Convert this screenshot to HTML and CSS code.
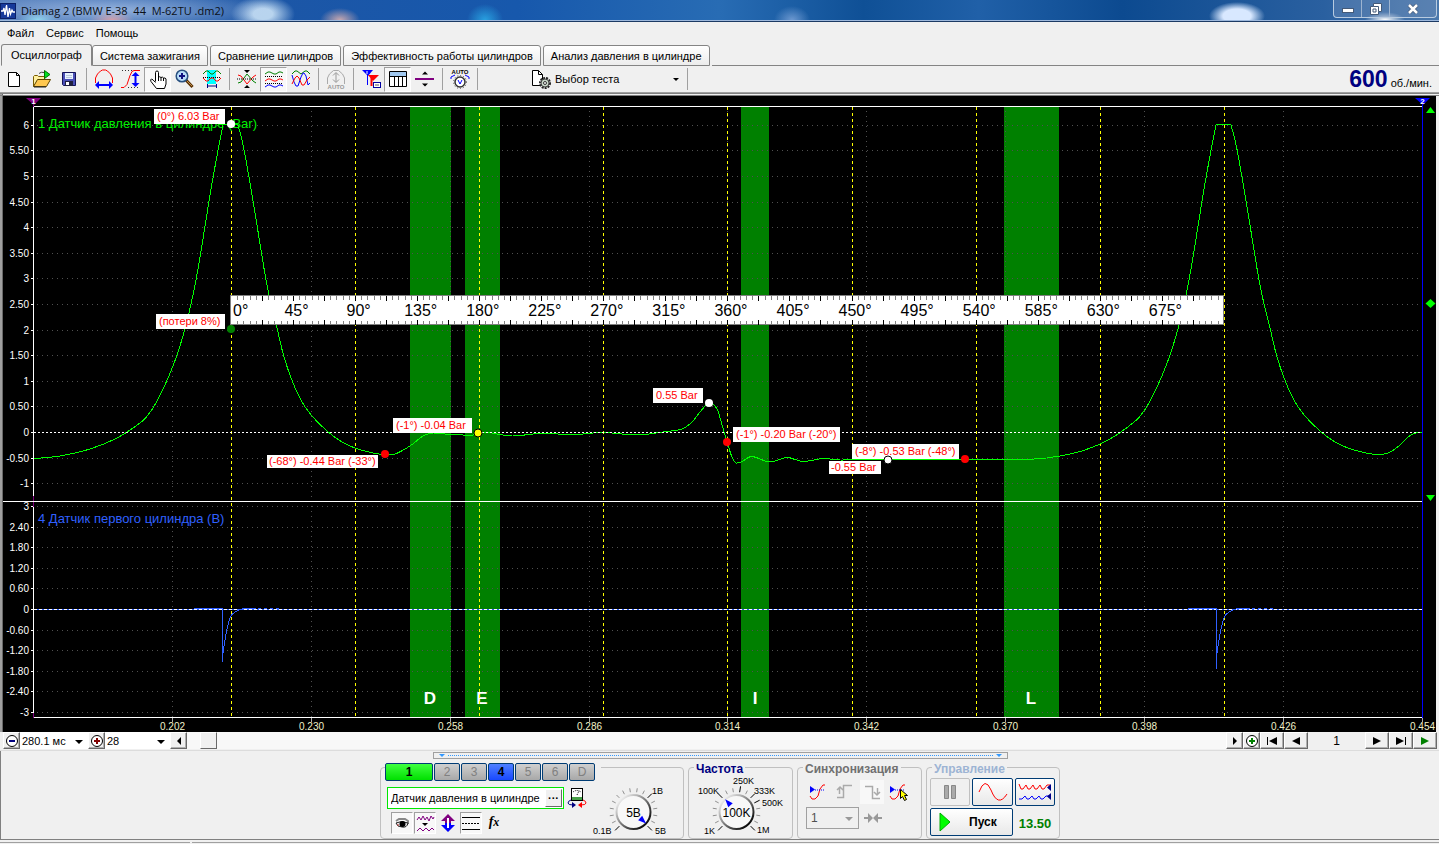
FILE: index.html
```html
<!DOCTYPE html>
<html lang="ru">
<head>
<meta charset="utf-8">
<title>Diamag 2</title>
<link rel="stylesheet" href="styles.css">
</head>
<body>
<div class="window">
  <header class="titlebar">
    <svg class="app-icon" width="16" height="16" viewBox="0 0 16 16"><rect width="16" height="16" fill="#16399a"/><path d="M.5 0v16M15.500 0v16M0 .5h16M0 15.500h16" stroke="#0a1f66"/><path d="M1 8h2l1-3 1 7 1.500-10 1.500 12 1.500-9 1 6 1.500-4 1 2h2" fill="none" stroke="#fff" stroke-width="1.300"/></svg>
    <span class="title-text">Diamag 2 (BMW E-38 &nbsp;44 &nbsp;M-62TU .dm2)</span>
    <div class="caption">
      <button aria-label="Свернуть"><svg width="12" height="8" viewBox="0 0 12 8"><rect x=".5" y="3.500" width="11" height="4" fill="#fff" stroke="#445a78"/></svg></button>
      <button aria-label="Развернуть"><svg width="12" height="12" viewBox="0 0 12 12"><path d="M3.500.5h8v8h-3v3h-8v-8h3z" fill="#fff" stroke="#445a78"/><path d="M3.500 3.500h5v5M3 6h3v3H3z" fill="none" stroke="#445a78"/></svg></button>
      <button class="caption-close" aria-label="Закрыть"><svg width="12" height="10" viewBox="0 0 12 10"><path d="M2 1l8 8M10 1L2 9" stroke="#445a78" stroke-width="4"/><path d="M2 1l8 8M10 1L2 9" stroke="#fff" stroke-width="2.500"/></svg></button>
    </div>
  </header>

  <nav class="menu">
    <button>Файл</button><button>Сервис</button><button>Помощь</button>
  </nav>

  <div class="tabs" role="tablist">
    <button class="tab active" role="tab" aria-selected="true">Осциллограф</button>
    <button class="tab" role="tab">Система зажигания</button>
    <button class="tab" role="tab">Сравнение цилиндров</button>
    <button class="tab" role="tab">Эффективность работы цилиндров</button>
    <button class="tab" role="tab">Анализ давления в цилиндре</button>
    <div class="tab-rest"></div>
  </div>

  <div class="toolbar">
    <button class="tool" aria-label="Новый"><svg width="20" height="20" viewBox="0 0 20 20"><path d="M3.500 3.500h8l3 3v11h-11z" fill="#fff" stroke="#000"/><path d="M11.500 3.500v3h3" fill="none" stroke="#000"/></svg></button>
    <button class="tool" aria-label="Открыть"><svg width="20" height="20" viewBox="0 0 20 20"><path d="M1.500 17.500v-10l1-1h3l1 1h6v3" fill="#fff0a0" stroke="#7a5c00"/><path d="M1.500 17.500l4-7h13l-4 7z" fill="#ffc850" stroke="#5c4400"/><path d="M2 18h12" stroke="#222"/><path d="M12.500 1.500v8l5.500-4z" fill="#00e020" stroke="#007000"/><path d="M7 4.500q2-2 5-1" fill="none" stroke="#444"/></svg></button>
    <button class="tool" aria-label="Сохранить"><svg width="20" height="20" viewBox="0 0 20 20"><path d="M3.500 3.500h13v13h-12l-1-1z" fill="#4a50b8" stroke="#14145a"/><rect x="6" y="4" width="8" height="6" fill="#e8f2ff"/><path d="M7 6.500h6M7 8.500h6" stroke="#b8c8dc"/><rect x="6" y="12" width="8" height="5" fill="#202040"/><rect x="7" y="13" width="3" height="3" fill="#fff"/></svg></button>
    <i class="sep"></i>
    <button class="tool" aria-label="Ширина"><svg width="20" height="20" viewBox="0 0 20 20"><path d="M1.500 14V9l2-4 3-3 2-1h3l2 1 3 3 2 4v5" fill="none" stroke="red"/><path d="M4 16h12" stroke="#00f" stroke-width="2"/><path d="M1 16l4-4v8zM19 16l-4-4v8z" fill="#00f"/></svg></button>
    <button class="tool" aria-label="Высота"><svg width="20" height="20" viewBox="0 0 20 20"><path d="M0 18.500h3l3-3 3-9 2-4 2-1h6" fill="none" stroke="red"/><path d="M1 1.500h11M7 18.500h12" stroke="#333" stroke-dasharray="1 2"/><path d="M14.500 6v9" stroke="#00f" stroke-width="2"/><path d="M14.500 3l-4 4h8zM14.500 18l-4-4h8z" fill="#00f"/></svg></button>
    <button class="tool pressed" aria-label="Рука"><svg width="20" height="20" viewBox="0 0 20 20"><path d="M7.500 12.500V3.500q0-1.500 1.500-1.500t1.500 1.500v5q1-1.500 2.500 0 1.500-1 2.500.5 2-.5 2.500 1v5l-1.500 4.500H8.500L3 12.500q-1-2 .5-2.500 1 0 4 3.500" fill="#fff" stroke="#000"/><path d="M10.500 8v4M13 8.500V12M15.500 9v3" stroke="#000"/></svg></button>
    <button class="tool" aria-label="Лупа"><svg width="20" height="20" viewBox="0 0 20 20"><path d="M11 11l6.500 7" stroke="#5a3000" stroke-width="3"/><path d="M12 12l5 5" stroke="#c09050"/><circle cx="7" cy="7" r="5.800" fill="#b8dcf8" stroke="#285080" stroke-width="1.500"/><path d="M4 7h6M7 4v6" stroke="#101080" stroke-width="2"/></svg></button>
    <button class="tool" aria-label="Фрагмент"><svg width="20" height="20" viewBox="0 0 20 20"><rect x="5" y="1" width="9" height="14" fill="#0ff"/><path d="M1 5l3-3h2l3 3h2l3-3h2l3 3" fill="none" stroke="green"/><path d="M1 8.500h18" stroke="#000" stroke-dasharray="1 1"/><path d="M1 9l3 3h2l3-3h2l3 3h2l3-3" fill="none" stroke="red"/><path d="M5.500 15v4M14.500 15v4M6 17h8" stroke="#000080"/></svg></button>
    <i class="sep"></i>
    <button class="tool" aria-label="Центр"><svg width="20" height="20" viewBox="0 0 20 20"><path d="M7 1h6l-3 3zM7 19h6l-3-3z" fill="#000"/><path d="M1 14l3-1 6-8 6 7 3 2" fill="none" stroke="green"/><path d="M1 6l3 1 6 8 6-7 3-2" fill="none" stroke="red"/><path d="M0 10h20" stroke="#000" stroke-dasharray="1 1"/></svg></button>
    <button class="tool pressed" aria-label="Раздельно"><svg width="20" height="20" viewBox="0 0 20 20"><g fill="none"><path d="M1 5l3-2h2l4 2h2l3-2h2l2 1" stroke="green"/><path d="M1 12l3-2h2l4 2h2l3-2h2l2 1" stroke="red"/><path d="M1 18l3-2h2l4 2h2l3-2h2l2 1" stroke="#00f"/><path d="M1 7.500h18M1 14.500h18" stroke="#000" stroke-dasharray="1 1"/></g></svg></button>
    <button class="tool" aria-label="Совмещение"><svg width="20" height="20" viewBox="0 0 20 20"><g fill="none"><path d="M1 5l3-3h2l4 3 4-3h2l3 3" stroke="green"/><path d="M1 6l2 7 2 4h2l3-9 2-4h1l2 3 2 9 2-2" stroke="#00f"/><path d="M1 15l3-6 2-2 2 2 3 7h2l3-5 3-3" stroke="red"/></g></svg></button>
    <i class="sep"></i>
    <button class="tool" aria-label="Авто" disabled><svg width="20" height="20" viewBox="0 0 20 20"><path d="M1.500 15V9l2-4 4-3.500h5l4 3.500 2 4v6" fill="none" stroke="#aaa"/><path d="M10 4v9M7 6.500l3-3 3 3M7 10.500l3 3 3-3" fill="none" stroke="#999"/><text x="10" y="20" class="tiny" fill="#999">AUTO</text></svg></button>
    <i class="sep"></i>
    <button class="tool" aria-label="Маркеры"><svg width="20" height="20" viewBox="0 0 20 20"><path d="M1 1h11l-5 6z" fill="#00f"/><path d="M6.500 6v10" stroke="#00f"/><path d="M7 6h11l-6 6z" fill="red"/><path d="M10.500 8v9" stroke="red" stroke-width="2"/><path d="M6 2v3" stroke="#fff"/><rect x="12.500" y="13.500" width="7" height="5" fill="#fff" stroke="#0000a0"/><path d="M14 16h4" stroke="#555"/></svg></button>
    <button class="tool pressed" aria-label="Таблица"><svg width="20" height="20" viewBox="0 0 20 20"><path d="M1.500 2.500h17v15h-17z" fill="#fff" stroke="#000"/><path d="M2 3h16v4H2z" fill="#a0c8f0"/><path d="M1 7.500h18M6.500 7v10M10.500 7v10M14.500 7v10" stroke="#000"/></svg></button>
    <button class="tool" aria-label="Разделитель"><svg width="20" height="20" viewBox="0 0 20 20"><path d="M0 10h19" stroke="#800080" stroke-width="2"/><path d="M7 5.500h6l-3-3zM7 14.500h6l-3 3z"/></svg></button>
    <i class="sep"></i>
    <button class="tool" aria-label="Авто вольтметр"><svg width="20" height="20" viewBox="0 0 20 20"><text x="10" y="5" class="tiny">AUTO</text><path d="M1 10V8l4-2M19 10V8l-4-2" fill="none" stroke="#00f"/><circle cx="10" cy="13" r="5" fill="#fff" stroke="#333" stroke-width="1.500"/><path d="M8 11l2 4 2-4" fill="none" stroke="#00f"/><circle cx="10" cy="13" r="6.500" fill="none" stroke="#555" stroke-dasharray="1 2"/></svg></button>
    <i class="sep"></i>
    <button class="test-picker">
      <svg width="20" height="20" viewBox="0 0 20 20"><path d="M1.500 1.500h6l4 4v11h-10z" fill="#fff" stroke="#000"/><path d="M7.500 1.500v4h4" fill="none" stroke="#000"/><circle cx="14" cy="14" r="5" fill="none" stroke="#222" stroke-width="2" stroke-dasharray="2 1"/><circle cx="14" cy="14" r="4" fill="#c8d8c8" stroke="#444"/><circle cx="14" cy="14" r="1.500" fill="#fff" stroke="#333"/></svg>
      <span>Выбор теста</span><i class="caret"></i>
    </button>
    <i class="sep"></i>
    <div class="rpm"><b>600</b><span>об./мин.</span></div>
  </div>

  <main class="scope">
    <svg id="chart" class="chart" viewBox="3 96 1433 636" role="img" aria-label="Осциллограмма"></svg>
  </main>

  <div class="navbar">
    <button class="nav-btn nav-small" aria-label="Уменьшить"><svg width="14" height="14" viewBox="0 0 14 14"><circle cx="7" cy="7" r="5.500" fill="#fff" stroke="#000"/><path d="M4 7h6" stroke="#000080" stroke-width="2"/></svg></button>
    <span class="combo combo-time"><select aria-label="Длительность"><option>280.1 мс</option></select></span>
    <button class="nav-btn nav-small" aria-label="Увеличить"><svg width="14" height="14" viewBox="0 0 14 14"><circle cx="7" cy="7" r="5.500" fill="#fff" stroke="#000"/><path d="M4 7h6M7 4v6" stroke="#800000" stroke-width="2"/></svg></button>
    <span class="combo combo-num"><select aria-label="Масштаб"><option>28</option></select></span>
    <button class="nav-btn nav-small" aria-label="Влево"><svg width="8" height="8" viewBox="0 0 8 8"><path d="M6 0v8L2 4z"/></svg></button>
    <div class="track"><button class="thumb" aria-label="Прокрутка"></button></div>
    <button class="nav-btn nav-small" aria-label="Вправо"><svg width="8" height="8" viewBox="0 0 8 8"><path d="M2 0v8l4-4z"/></svg></button>
    <button class="nav-btn nav-small" aria-label="Добавить"><svg width="14" height="14" viewBox="0 0 14 14"><circle cx="7" cy="7" r="5.500" fill="#fff" stroke="#000"/><path d="M4 7h6M7 4v6" stroke="green" stroke-width="2"/></svg></button>
    <button class="nav-btn" aria-label="В начало"><svg width="12" height="8" viewBox="0 0 12 8"><path d="M1 0h1v8H1zM11 0v8L3 4z"/></svg></button>
    <button class="nav-btn" aria-label="Назад"><svg width="12" height="8" viewBox="0 0 12 8"><path d="M10 0v8L2 4z"/></svg></button>
    <span class="page">1</span>
    <button class="nav-btn" aria-label="Вперёд"><svg width="12" height="8" viewBox="0 0 12 8"><path d="M2 0v8l8-4z"/></svg></button>
    <button class="nav-btn" aria-label="В конец"><svg width="12" height="8" viewBox="0 0 12 8"><path d="M10 0h1v8h-1zM1 0v8l8-4z"/></svg></button>
    <button class="nav-btn" aria-label="Воспроизвести"><svg width="12" height="8" viewBox="0 0 12 8"><path d="M2 0v8l8-4z" fill="green"/></svg></button>
  </div>

  <section class="panel">
    <div class="grip"><i></i><b></b><i></i></div>
    <div class="groups">
      <fieldset class="group group-input">
        <div class="channel-col">
          <div class="channels">
            <button class="ch ch-on">1</button><button class="ch" disabled>2</button><button class="ch" disabled>3</button><button class="ch ch-blue">4</button><button class="ch" disabled>5</button><button class="ch" disabled>6</button><button class="ch" disabled>D</button>
          </div>
          <div class="sensor">
            <div class="sensor-box"><input aria-label="Датчик" value="Датчик давления в цилиндре"><button class="dots" aria-label="Выбрать датчик">···</button></div>
            <button class="plain" aria-label="Поменять"><svg width="20" height="20" viewBox="0 0 20 20"><rect x="4.500" y=".5" width="11" height="12" fill="#fff" stroke="#000"/><path d="M6 4q4-3 8 0M10 7l2-4" fill="none" stroke="#000" stroke-dasharray="1 1"/><path d="M5 9h10v3H5z" fill="#48a048"/><path d="M4 12q-3 1-3 3 0 2 5 2" fill="none" stroke="#000080"/><path d="M5 14l4 3-4 3z" fill="#000080"/><path d="M16 12q3 1 3 3 0 2-5 2" fill="none" stroke="red"/><path d="M15 14l-4 3 4 3z" fill="red"/></svg></button>
          </div>
          <div class="view">
            <button class="toggle on" aria-label="Видимость"><svg width="20" height="20" viewBox="0 0 20 20"><path d="M4 8l3-2h6l3 2v3" fill="none" stroke="#888" stroke-width="2"/><path d="M4 10q5-3 12 0-1 5-6 4-5 0-6-4z" fill="#e8e8e8" stroke="#222"/><circle cx="10.500" cy="11" r="3"/><path d="M6 11v2" stroke="#c44"/></svg></button>
            <button class="toggle on" aria-label="Фильтр"><svg width="20" height="20" viewBox="0 0 20 20"><path d="M2 7l2-3 2 3 2-4 2 4 2-3 2 4 2-5 2 3 1-2" fill="none" stroke="purple"/><path d="M7 10h6l-3 3z"/><path d="M2 18l3-3 3 3 3-3 3 3 3-3 2 2" fill="none" stroke="purple"/></svg></button>
            <button class="toggle" aria-label="Сдвиг"><svg width="20" height="20" viewBox="0 0 20 20"><path d="M10 1l7 7h-4v2H7V8H3z" fill="purple"/><path d="M10 19l7-7h-4v-2H7v2H3z" fill="#00f"/><path d="M10 5v10" stroke="#fff" stroke-width="2"/></svg></button>
            <button class="toggle on" aria-label="Уровни"><svg width="20" height="20" viewBox="0 0 20 20"><path d="M1 4.500h18M1 16.500h18" stroke="#000"/><path d="M1 10.500h18" stroke="#000" stroke-dasharray="2 1"/></svg></button>
            <button class="toggle fx" aria-label="Функция">f<small>x</small></button>
          </div>
        </div>
        <svg class="knob" id="knob-volt" width="86" height="70" viewBox="590 768 86 70" role="img" aria-label="5В"></svg>
      </fieldset>
      <fieldset class="group group-freq">
        <legend class="navy">Частота</legend>
        <svg class="knob" id="knob-freq" width="96" height="68" viewBox="692 771 96 68" role="img" aria-label="100K"></svg>
      </fieldset>
      <fieldset class="group group-sync">
        <legend class="gray">Синхронизация</legend>
        <div class="sync-icons">
          <button class="plain" aria-label="Уровень"><svg width="20" height="20" viewBox="0 0 20 20"><path d="M2 14l2 3h3l3-3 2-7 3-4h2" fill="none" stroke="red"/><path d="M2 4v7l5-3.500z" fill="#00f"/><path d="M7 8h10" stroke="#00f" stroke-dasharray="1 1"/></svg></button>
          <button class="plain" aria-label="Фронт"><svg width="20" height="20" viewBox="0 0 20 20"><path d="M2 15.500h6.500v-12H17M4.500 5v7M2 8l3-3 3 3" fill="none" stroke="#aaa" stroke-width="1.500"/></svg></button>
          <button class="plain checked" aria-label="Спад"><svg width="20" height="20" viewBox="0 0 20 20"><path d="M3 4.500h7.500v12H18M15.500 6v7M12 10l3 3 3-3" fill="none" stroke="#aaa" stroke-width="1.500"/></svg></button>
          <button class="plain" aria-label="Авто"><svg width="20" height="20" viewBox="0 0 20 20"><path d="M1 14l2 3h3l3-3 2-7 3-4h2" fill="none" stroke="red"/><path d="M1 4v7l5-3.500z" fill="#00f"/><path d="M6 8h10" stroke="#00f" stroke-dasharray="1 1"/><path d="M11.500 7.500v9l2-2 2 4 2-1-2-4h3z" fill="#ff0" stroke="#000"/></svg></button>
        </div>
        <div class="sync-row">
          <span class="combo combo-sync"><select aria-label="Канал синхронизации" disabled><option>1</option></select></span>
          <svg width="20" height="12" viewBox="0 0 20 12"><path d="M1 6h7M12 6h7" stroke="#999" stroke-width="2"/><path d="M5 1v10l5-5zM15 1v10l-5-5z" fill="#999"/></svg>
        </div>
      </fieldset>
      <fieldset class="group group-run">
        <legend class="pale">Управление</legend>
        <div class="run-grid">
          <button class="big" aria-label="Пауза" disabled><svg width="14" height="16" viewBox="0 0 14 16"><path d="M1.500 1.500h4v13h-4zM8.500 1.500h4v13h-4z" fill="#aaa" stroke="#888"/></svg></button>
          <button class="big lit" aria-label="Осциллограмма"><svg width="30" height="22" viewBox="0 0 30 22"><path d="M1 11q6-16 12-2 7 18 16 4" fill="none" stroke="red"/></svg></button>
          <button class="big lit" aria-label="Запись"><svg width="34" height="22" viewBox="0 0 34 22"><path d="M1 3l2 5h2l3-4 2 4h2l3-4 2 4h2l3-4 2 4h2l3-4h3" fill="none" stroke="red"/><path d="M1 18h3l3-3 2 3h2l3-3 2 3h2l3-3 2 3h2l3-3h4" fill="none" stroke="#00f"/><path d="M33 3v7l-4-3.500zM33 12v7l-4-3.500z" fill="#008"/></svg></button>
          <button class="big lit start"><svg width="12" height="20" viewBox="0 0 12 20"><path d="M1 1v18l10-9z" fill="#0f0" stroke="#0a0"/></svg>Пуск</button>
          <output class="volts">13.50</output>
        </div>
      </fieldset>
    </div>
  </section>
  <footer class="status"><i></i><i></i></footer>
</div>
<script src="app.js"></script>
</body>
</html>
```
FILE: styles.css
```css
* { box-sizing: border-box; }
body { margin: 0; background: #f0f0f0; color: #000; font: 11px/14px "Liberation Sans", Arial, sans-serif; }
button, select, input { font: inherit; color: inherit; margin: 0; padding: 0; border: 0; background: none; border-radius: 0; }
svg { display: block; flex: none; }
.window { display: flex; flex-direction: column; min-height: 100vh; overflow: hidden; }

.titlebar { display: flex; align-items: center; height: 22px; gap: 5px; border-bottom: 1px solid #1c3a64; box-shadow: inset 0 -1px #9db8dc;
  background:
    radial-gradient(ellipse 170px 20px at 110px 10px, rgba(190,210,240,.7), transparent),
    radial-gradient(ellipse 20px 9px at 38px 20px, #7fd8f0, transparent),
    radial-gradient(ellipse 22px 10px at 112px 20px, #e08080, transparent),
    radial-gradient(ellipse 32px 18px at 263px 14px, #b8d4ee 30%, transparent),
    radial-gradient(ellipse 20px 12px at 340px 20px, #c8a8b0, transparent),
    radial-gradient(ellipse 18px 16px at 485px 20px, #28a0e0, transparent),
    radial-gradient(ellipse 18px 14px at 792px 20px, #6c98d0, transparent),
    radial-gradient(ellipse 28px 14px at 1237px 16px, #d8e8ff 50%, transparent),
    radial-gradient(ellipse 20px 8px at 1385px 20px, #fff, transparent),
    linear-gradient(90deg, #4c78b8, #1c56a6 18%, #1758ac 36%, #286cb4 50%, #0f5096 60%, #2060a8 68%, #0c4a90 78%, #2a60a0 92%, #4a78ac); }
.title-text { font: 11px/18px "Open Sans", sans-serif; color: #0a1018; white-space: pre; }
.caption { display: flex; align-self: flex-start; margin-left: auto; margin-right: 2px; height: 18px; border: 1px solid #b8cbe0; border-top: 0; border-radius: 0 0 4px 4px; background: rgba(120,150,190,.35); }
.caption button { display: flex; align-items: center; justify-content: center; width: 28px; border-right: 1px solid #9db4d0; }
.caption .caption-close { width: 46px; border: 0; }

.menu { display: flex; height: 21px; padding: 0 1px; }
.menu button { padding: 0 6px; }

.tabs { display: flex; height: 23px; align-items: flex-end; padding-left: 1px; }
.tab { height: 21px; padding: 0 7px; margin-right: 2px; border: 1px solid #848484; border-radius: 3px 3px 0 0; background: linear-gradient(#fff, #ececec); white-space: nowrap; }
.tab.active { height: 22px; padding: 0 9px; margin-right: 0; border-bottom-color: #f0f0f0; background: #f0f0f0; }
.tab-rest { flex: 1; border-bottom: 1px solid #848484; }

.toolbar { display: flex; align-items: center; height: 27px; padding-left: 1px; border-bottom: 1px solid #a0a0a0; }
.tool { display: flex; align-items: center; justify-content: center; width: 27px; height: 25px; flex: none; }
.tool.pressed { border: 1px solid #a0a0a0; border-right-color: #fff; border-bottom-color: #fff; background: #f8f8f8; }
.tiny { font: bold 6px "Liberation Sans", sans-serif; text-anchor: middle; }
.sep { flex: none; width: 1px; height: 22px; margin: 0 3px 0 4px; background: #a0a0a0; }
.test-picker { display: flex; align-items: center; gap: 4px; width: 154px; height: 25px; margin-left: 48px; padding: 0 4px 0 2px; }
.caret { margin-left: auto; border: 3px solid transparent; border-top-color: #000; border-bottom: 0; }
.rpm { display: flex; align-items: baseline; gap: 3px; margin-left: auto; padding-right: 7px; }
.rpm b { color: #000080; font-size: 23px; line-height: 26px; }

.scope { padding: 0 3px; border-top: 3px double #808080; background: linear-gradient(90deg, #a0a0a0 2px, #696969 2px 3px, #f0f0f0 3px); }
.chart { width: 100%; height: auto; background: #000; font-family: "Liberation Sans", Arial, sans-serif; }
.chart text { white-space: pre; }
.axis-text { font-size: 10px; fill: #fff; }
.time-text { font-size: 10px; fill: #f0f0c8; text-anchor: middle; }
.value-text { font-size: 11px; fill: #f00; }
.angle-text { font-size: 16px; fill: #000; }
.channel-text { font-size: 13px; }
.band-text { font-size: 17px; font-weight: bold; fill: #fff; text-anchor: middle; }
.mark-text { font-size: 8px; font-weight: bold; fill: #fff; text-anchor: middle; }

.navbar { display: flex; height: 19px; padding: 0 2px 1px 3px; border-bottom: 1px solid #dcdcdc; }
.nav-btn { display: flex; align-items: center; justify-content: center; width: 24px; flex: none; border: 1px solid #fff; border-right-color: #696969; border-bottom-color: #696969; box-shadow: inset -1px -1px #b0b0b0; background: #f0f0f0; }
.nav-small { width: 17px; }
.combo { position: relative; display: flex; background: #fff; }
.combo select { appearance: none; width: 100%; padding-left: 2px; outline: 0; opacity: 1; }
.combo::after { content: ""; position: absolute; right: 5px; top: 50%; margin-top: -1px; border: 4px solid transparent; border-top-color: #000; border-bottom: 0; pointer-events: none; }
.combo-time, .combo-sync { flex: none; }
.combo-time { width: 68px; }
.combo-num { width: 65px; flex: none; }
.track { flex: 1; padding-left: 13px; background: #f8f8f8; }
.thumb { display: block; width: 17px; height: 100%; border: 1px solid #fff; border-right-color: #696969; border-bottom-color: #696969; background: #f0f0f0; }
.page { width: 57px; font-size: 12px; line-height: 18px; text-align: center; }

.panel { flex: 1; display: flex; flex-direction: column; align-items: center; padding-top: 1px; border-left: 1px solid #808080; border-bottom: 1px solid #808080; }
.grip { display: flex; align-items: center; width: 575px; height: 7px; padding: 0 5px; gap: 3px; border: 1px solid #a0a0a0; }
.grip b { flex: 1; border-top: 1px dotted #3399ff; }
.grip i { border: 3px solid transparent; border-top-color: #3399ff; border-bottom: 0; }
.groups { display: flex; align-items: stretch; gap: 4px; margin-top: 8px; }
.group { position: relative; min-width: 0; height: 72px; margin: 0; padding: 0; border: 1px solid #c0c0c0; border-radius: 4px; }
.group legend { position: absolute; top: -6px; left: 5px; padding: 0 2px; background: #f0f0f0; font: bold 12px/14px "Liberation Sans", sans-serif; white-space: nowrap; }
.navy { color: #000080; }
.gray { color: #707070; }
.pale { color: #9db4d4; }
.group-input { display: flex; width: 304px; }
.channel-col { width: 210px; margin-top: -5px; padding-left: 4px; flex: none; }
.channels { display: flex; gap: 1px; width: 216px; padding-right: 5px; background: #f0f0f0; }
.ch { width: 26px; height: 18px; flex: none; border: 1px solid #003c74; border-radius: 2px; background: linear-gradient(#d0d0d0, #a8a8a8); color: #808080; font-size: 12px; line-height: 14px; }
.ch-on { width: 48px; background: linear-gradient(#40ff40, #00e000); color: #000; font-weight: bold; }
.ch-blue { background: linear-gradient(#5080ff, #1848ff); color: #000; font-weight: bold; }
.sensor { display: flex; align-items: center; gap: 1px; margin: 6px 0 3px 2px; }
.sensor-box { display: flex; width: 177px; height: 22px; padding: 1px; border: 1px solid #00e800; background: #fff; }
.sensor-box input { flex: 1; min-width: 0; padding-left: 2px; outline: 0; }
.dots { width: 17px; border: 1px solid #fff; border-right-color: #696969; border-bottom-color: #696969; background: #f0f0f0; font-weight: bold; line-height: 14px; }
.view { display: flex; gap: 1px; margin-left: 6px; }
.toggle { display: flex; align-items: center; justify-content: center; width: 22px; height: 22px; }
.toggle.on { border: 1px solid #a0a0a0; border-right-color: #fff; border-bottom-color: #fff; background: #f8f8f8; }
.fx { align-items: baseline; font: italic bold 14px/20px "Liberation Serif", serif; }
.fx small { font-size: 12px; }
.knob { font: 9px "Liberation Sans", Arial, sans-serif; }
.knob-value { font-size: 12px; text-anchor: middle; }
.group-freq { width: 105px; }
.group-freq .knob { margin: 3px 0 0 4px; }
.group-sync { width: 125px; padding: 12px 8px 0; }
.sync-icons { display: flex; gap: 3px; }
.plain { display: flex; align-items: center; justify-content: center; width: 24px; height: 24px; flex: none; }
.sensor .plain { height: 22px; }
.checked { background: #f8f8f8; }
.sync-row { display: flex; align-items: center; gap: 4px; margin-top: 3px; }
.combo-sync { width: 53px; height: 22px; border: 1px solid #a0a0a0; background: #f0f0f0; color: #505050; font-size: 12px; }
.combo-sync::after { border-top-color: #999; }
.combo-sync select { padding-left: 4px; }
.group-run { width: 134px; padding: 10px 3px 0; }
.run-grid { display: grid; grid-template-columns: 40px 41px 40px; gap: 2px 2px; }
.big { display: flex; align-items: center; justify-content: center; height: 28px; border: 1px solid #c0c0c0; border-radius: 2px; }
.lit { border-color: #003c74; background: linear-gradient(#fff, #e8e8e8); }
.start { grid-column: 1 / 3; justify-content: flex-start; gap: 18px; padding-left: 8px; font: bold 12px "Liberation Sans", sans-serif; }
.volts { align-self: center; text-align: center; color: #008000; font: bold 13px/16px "Liberation Sans", sans-serif; margin-top: 4px; }
.status { display: flex; gap: 2px; height: 4px; padding-top: 2px; }
.status i { flex: 1; border-top: 1px solid #a0a0a0; }
.status i:first-child { flex: 0 0 190px; }
```
FILE: app.js
```js
const NS = 'http://www.w3.org/2000/svg';

function add(parent, tag, attrs, text) {
  const el = document.createElementNS(NS, tag);
  for (const key in attrs) el.setAttribute(key, attrs[key]);
  if (text !== undefined) el.textContent = text;
  parent.appendChild(el);
  return el;
}

function line(parent, x1, y1, x2, y2, stroke, dash, width) {
  const attrs = { x1, y1, x2, y2, stroke, 'stroke-width': width || 1, 'shape-rendering': 'crispEdges' };
  if (dash) attrs['stroke-dasharray'] = dash;
  return add(parent, 'line', attrs);
}

// Catmull-Rom spline through the sample points
function smooth(pts) {
  let d = `M${pts[0]}`;
  for (let i = 0; i < pts.length - 1; i++) {
    const a = pts[i - 1] || pts[i], b = pts[i], c = pts[i + 1], e = pts[i + 2] || c;
    d += `C${b[0] + (c[0] - a[0]) / 6},${b[1] + (c[1] - a[1]) / 6} ${c[0] - (e[0] - b[0]) / 6},${c[1] - (e[1] - b[1]) / 6} ${c}`;
  }
  return d;
}

function drawChart(svg) {
  const L = 33.5, R = 1422, T = 106.5, B = 717.5, M = 501.5;

  [[410, 41, 'D', 430], [465, 35, 'E', 482], [741, 28, 'I', 755], [1004, 55, 'L', 1031]].forEach(([x, w, name, cx]) => {
    add(svg, 'rect', { x, y: 107, width: w, height: 610, fill: '#008000' });
    add(svg, 'text', { x: cx, y: 704, class: 'band-text' }, name);
  });

  const axis = (zero, step, from, to, inc) => {
    for (let v = from; v >= to - 0.01; v -= inc) {
      const value = Math.abs(v) < 0.01 ? 0 : v;
      const y = Math.round(zero - value * step) + 0.5;
      if (value) line(svg, 37, y, R, y, '#505050', '1 4');
      line(svg, 31, y, 34, y, '#fff');
      const label = Math.abs(value - Math.round(value)) < 0.01 ? String(Math.round(value)) : value.toFixed(2);
      add(svg, 'text', { x: 29, y: y + 3, class: 'axis-text', 'text-anchor': 'end' }, label);
    }
  };
  axis(432, 51.2, 6, -1, 0.5);
  axis(609, 34.2, 3, -3, 0.6);

  for (let i = 0; i < 10; i++) {
    const x = Math.round(172 + i * 138.85) + 0.5;
    if (i < 9) line(svg, x, 111, x, B, '#505050', '1 4');
    line(svg, x, B, x, B + 4, '#aaa');
    add(svg, 'text', { x, y: 730, class: 'time-text' }, (0.202 + i * 0.028).toFixed(3));
  }

  add(svg, 'text', { x: 38, y: 128, class: 'channel-text', fill: '#00f000' }, '1 Датчик давления в цилиндре (Bar)');
  add(svg, 'text', { x: 38, y: 523, class: 'channel-text', fill: '#3060ff' }, '4 Датчик первого цилиндра (В)');

  for (let i = 0; i < 9; i++) {
    const x = Math.floor(231.4 + i * 124.13) + 0.5;
    line(svg, x, 107, x, B, '#ffff00', '3 3');
  }

  const rise = [[140, 423], [148, 415], [156, 403], [164, 387], [171, 371], [178, 352], [185, 329], [191, 304], [196, 280], [201, 251], [206, 220], [211, 189], [216, 161], [220, 140], [223, 125]];
  const fall = [[238, 125], [242, 140], [246, 160], [251, 189], [256, 219], [261, 250], [266, 280], [271, 304], [277, 328], [284, 357], [293, 383], [302, 402], [312, 416], [327, 431], [342, 442], [355, 448], [373, 453], [385, 454.5]];
  const shift = pts => pts.map(([x, y]) => [x + 993, y]);
  const valley = [[395, 454], [410, 446], [423, 436], [433, 433], [450, 434.5], [473, 435], [487, 432.5], [512, 436], [540, 433.5], [575, 434.5], [603, 432.5], [637, 435], [663, 432], [682, 429], [692, 422], [700, 412], [709, 403], [717, 409], [722, 425], [727, 442], [732, 457], [736, 463], [743, 461], [752, 456.5], [770, 462], [787, 457.5], [803, 461.5], [823, 458.5], [840, 460], [870, 459.5], [940, 460], [980, 459.5], [1034, 459], [1060, 456], [1085, 450], [1110, 439]];
  const parts = [
    [[34, 458.5], [60, 456], [90, 449], [117, 438], ...rise],
    [...fall, ...valley, ...shift(rise)],
    [...shift(fall), [1388, 453], [1399, 446], [1407, 438], [1414, 433.5], [1422, 432.5]]
  ];
  parts.forEach(p => add(svg, 'path', { d: smooth(p), fill: 'none', stroke: '#00ff00', 'shape-rendering': 'crispEdges' }));
  line(svg, 223, 124.5, 238, 124.5, '#00ff00');
  line(svg, 1216, 124.5, 1231, 124.5, '#00ff00');
  line(svg, 34, 432.5, R, 432.5, '#fff', '2 2');

  line(svg, 34, 609.5, R, 609.5, '#3060ff');
  line(svg, 34, 609.5, R, 609.5, '#fff', '3 2');
  [[0, 662], [994, 669]].forEach(([dx, low]) => {
    line(svg, 194 + dx, 608.5, 223 + dx, 608.5, '#3060ff');
    line(svg, 222.5 + dx, 608, 222.5 + dx, low, '#3060ff');
    add(svg, 'path', { d: smooth([[223, 653], [225, 640], [228, 625], [231, 616], [235, 612], [240, 609.5], [245, 608.5]].map(([x, y]) => [x + dx, y])), fill: 'none', stroke: '#3060ff', 'shape-rendering': 'crispEdges' });
    line(svg, 245 + dx, 608.5, 256 + dx, 608.5, '#3060ff');
    line(svg, 258 + dx, 608.5, 280 + dx, 608.5, '#3060ff', '3 3');
  });

  line(svg, 33, T, R, T, '#fff');
  line(svg, L, T, L, B, '#fff');
  line(svg, L, 496, L, 507, '#800080');
  line(svg, L, 713, L, B, '#800080');
  line(svg, 3, M, R, M, '#fff');
  line(svg, L, B, R, B, '#fff');
  line(svg, 1422.5, 102, 1422.5, 718, '#0000ff');

  add(svg, 'path', { d: 'M26 98h15l-7 7z', fill: '#800080' });
  line(svg, L, 103, L, 107, '#800080');
  add(svg, 'text', { x: 33.5, y: 104, class: 'mark-text' }, '1');
  add(svg, 'path', { d: 'M1415 98h15l-7 7z', fill: '#0000ff' });
  add(svg, 'text', { x: 1422.5, y: 104, class: 'mark-text' }, '2');
  ['M1426 113h9l-4.500-6z', 'M1430.500 299l5 4.500-5 4.500-5-4.500z', 'M1426 495h9l-4.500 6z'].forEach(d => add(svg, 'path', { d, fill: '#00ff00' }));

  // Crank angle ruler
  add(svg, 'rect', { x: 230.5, y: 295.5, width: 993, height: 29, fill: '#fff', stroke: '#808080' });
  for (let i = 1; i < 160; i++) {
    const x = Math.floor(231.4 + i * 6.206) + 0.5, major = i % 5 === 0, len = major ? 5 : 4;
    const color = major ? '#000' : '#808080';
    line(svg, x, 296, x, 296 + len, color);
    line(svg, x, 325 - len, x, 325, color);
  }
  for (let i = 0; i < 16; i++) {
    const attrs = i ? { x: 234.5 + i * 62.06, 'text-anchor': 'middle' } : { x: 233 };
    add(svg, 'text', { ...attrs, y: 316, class: 'angle-text' }, i * 45 + '°');
  }

  [
    [154, 109, 71, 15, '(0°) 6.03 Bar'], [156, 314, 69, 15, '(потери 8%)'],
    [267, 455, 111, 13, '(-68°) -0.44 Bar (-33°)'], [393, 418, 79, 15, '(-1°) -0.04 Bar'],
    [653, 388, 50, 15, '0.55 Bar'], [733, 427, 107, 15, '(-1°) -0.20 Bar (-20°)'],
    [852, 444, 107, 15, '(-8°) -0.53 Bar (-48°)'], [829, 461, 52, 13, '-0.55 Bar']
  ].forEach(([x, y, width, height, label]) => {
    add(svg, 'rect', { x, y, width, height, fill: '#fff' });
    add(svg, 'text', { x: x + (height === 13 ? 2 : 3), y: y + (height === 13 ? 10 : 11), class: 'value-text' }, label);
  });

  [[231, 124, '#fff'], [231, 329, '#008000'], [385, 454, '#f00'], [478, 433, '#ff0', '#000'], [709, 403, '#fff'],
    [727, 442, '#f00'], [888, 460, '#fff', '#000'], [965, 459, '#f00']
  ].forEach(([cx, cy, fill, stroke]) => add(svg, 'circle', { cx, cy, r: 4, fill, stroke: stroke || 'none' }));
}

function drawKnob(svg, id, cx, cy, value, pointer, labels, ticks) {
  const grad = add(add(svg, 'defs', {}), 'linearGradient', { id, x1: 0, y1: 0, x2: 1, y2: 1 });
  add(grad, 'stop', { offset: 0.1, 'stop-color': '#f4f4f4' });
  add(grad, 'stop', { offset: 0.9, 'stop-color': '#000' });
  for (let a = 135; a <= 405; a += 18) {
    const r = a * Math.PI / 180, big = ticks.includes(a), end = big ? 26 : 24;
    add(svg, 'line', { x1: cx + 20 * Math.cos(r), y1: cy + 20 * Math.sin(r), x2: cx + end * Math.cos(r), y2: cy + end * Math.sin(r), stroke: big ? '#000' : '#909090' });
  }
  add(svg, 'circle', { cx, cy, r: 17, fill: '#f8f8f8', stroke: `url(#${id})`, 'stroke-width': 2 });
  add(svg, 'path', { d: 'M-4 -3L4 0L-4 3z', fill: '#0000ff', transform: `translate(${cx + 13 * Math.cos(pointer)} ${cy + 13 * Math.sin(pointer)}) rotate(${pointer * 180 / Math.PI})` });
  add(svg, 'text', { x: cx, y: cy + 5, class: 'knob-value' }, value);
  labels.forEach(([x, y, label]) => add(svg, 'text', { x, y }, label));
}

drawChart(document.getElementById('chart'));
drawKnob(document.getElementById('knob-volt'), 'ring-volt', 632.5, 812, '5В', 0.74, [[651, 794, '1В'], [654, 834, '5В'], [592, 834, '0.1В']], [135, 315, 405]);
drawKnob(document.getElementById('knob-freq'), 'ring-freq', 735.5, 812, '100K', -2.3, [[732, 784, '250K'], [697, 794, '100K'], [753, 794, '333K'], [761, 806, '500K'], [703, 834, '1K'], [756, 833, '1M']], [135, 225, 279, 315, 333, 405]);
```
